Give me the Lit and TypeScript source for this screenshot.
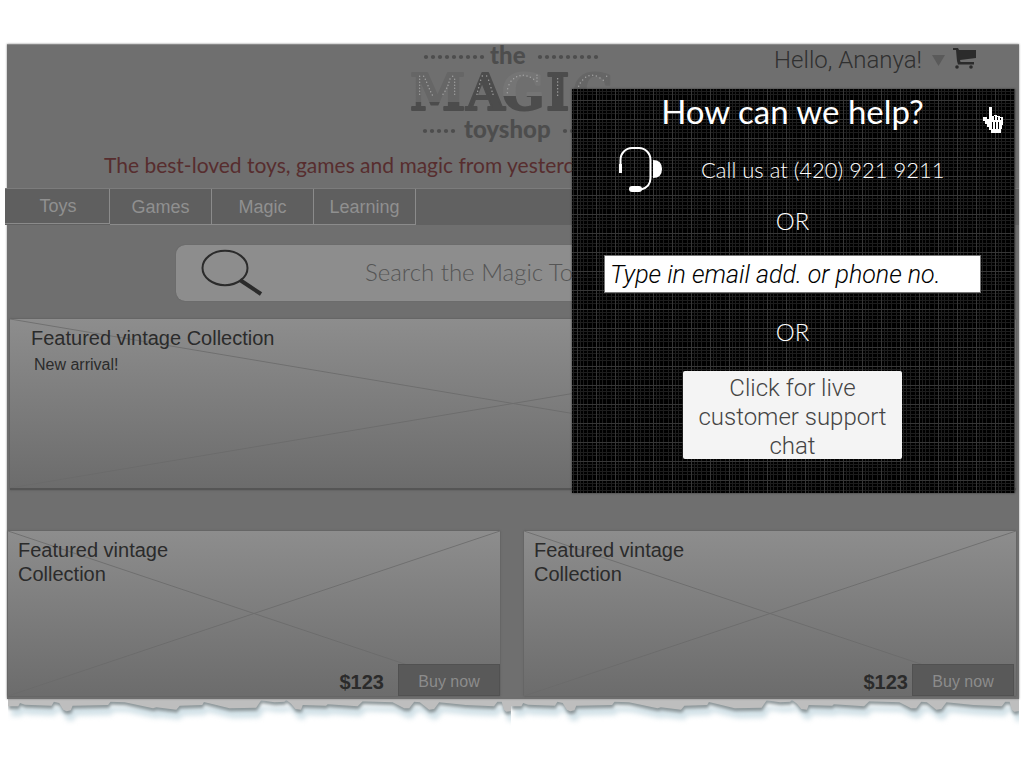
import { LitElement, html, css, svg } from "lit";
import { customElement } from "lit/decorators.js";

const TEAR =
  "M24 50 V80 L55 80 L60 70 L75 75 L155 78 L162 66 L178 70 L190 90 L200 95 L213 92 L218 78 L325 76 L332 66 L375 68 L460 86 L470 83 L530 90 L540 78 L608 76 L613 67 L690 86 L770 84 L785 62 L825 68 L855 66 L860 60 L875 72 L888 88 L905 90 L910 76 L980 78 L985 74 L1075 80 L1090 65 L1180 68 L1215 86 L1230 86 L1245 66 L1262 68 L1290 90 L1305 88 L1320 68 L1400 76 L1485 80 L1495 66 L1508 66 L1515 90 L1522 96 L1536 94 V50 Z";

const DOTS_M = [[89,118],[89,127],[89,136],[89,145],[89,154],[89,163],[89,172],[101,118],[106,127],[110,136],[114,146],[118,155],[122,164],[127,174],[188,118],[180,126],[177,136],[174,145],[170,154],[165,163],[159,172],[194,127],[194,136],[194,145],[194,154],[194,163],[194,172]];
const DOTS_A = [[277,117],[290,117],[272,130],[296,130],[269,141],[299,141],[266,152],[303,152],[263,163],[306,163],[261,172],[309,172]];
const DOTS_G = [[352,167],[353,155],[357,143],[363,133],[371,125],[380,119],[390,116],[400,115],[411,117],[421,121],[431,127],[441,133],[441,123],[441,115]];
const DOTS_I = [[503,125],[503,135],[503,145],[503,155],[503,165],[503,175]];
const DOTS_C = [[566,148],[571,138],[578,129],[587,121],[597,116],[608,115],[619,117],[630,123],[640,130],[650,118]];

@customElement("app-root")
export class AppRoot extends LitElement {
  static styles = css`
    :host {
      display: block;
      min-height: 100vh;
      box-sizing: border-box;
      padding: 44px 5px 0 7px;
      background: #fff;
      color: #2b2b2b;
      font-family: "Liberation Sans", Arial, sans-serif;
    }
    * { box-sizing: border-box; }
    .shell {
      position: relative;
      background: #6f6f6f;
      border-top: 1px solid #8a8a8a;
      box-shadow: 0 0 2px #8a8a8a;
      padding-bottom: 3px;
    }
    .header {
      display: grid;
      grid-template-columns: 1fr 200px 1fr;
      height: 99px;
      padding-right: 6px;
    }
    .logo { grid-column: 2; display: block; width: 200px; height: 100px; overflow: visible; }
    .word { font-family: Lato, sans-serif; font-weight: 900; font-size: 24px; fill: #4d4d4d; }
    .magic { font-family: "DejaVu Serif", serif; font-weight: 700; font-size: 50px; stroke-width: 2px; stroke-linejoin: round; }
    .account {
      justify-self: end;
      display: flex;
      align-items: center;
      gap: 8px;
      height: 30px;
      margin-right: 36px;
    }
    .greet {
      display: flex;
      align-items: center;
      gap: 10px;
      padding: 0;
      border: 0;
      background: none;
      color: #303030;
      font: 300 24px Roboto, "Liberation Sans", sans-serif;
      white-space: nowrap;
    }
    .tagline {
      margin: 0;
      padding: 6px 0 0 97px;
      height: 44px;
      color: #572d2e;
      font: 400 21px/30px Lato, sans-serif;
      white-space: nowrap;
    }
    .nav {
      display: flex;
      height: 37px;
      margin-left: -2px;
      background: #616161;
      border-top: 1px solid #7c7c7c;
    }
    .tab {
      width: 102px;
      border: 1px solid #8b8b8b;
      border-left: 0;
      border-top: 0;
      background: #5f5f5f;
      color: #909090;
      font-size: 18px;
      line-height: 36px;
      text-align: center;
      text-decoration: none;
    }
    .tab.first { width: 105px; height: 35px; line-height: 34px; padding-left: 2px; }
    .search {
      display: flex;
      align-items: center;
      height: 56px;
      margin: 20px 169px 18px;
      border-radius: 9px;
      background: #8d8d8d;
      box-shadow: 0 0 1px #555;
    }
    .lens { width: 64px; height: 50px; margin: 0 101px 0 24px; flex: none; }
    .query {
      flex: 1;
      min-width: 0;
      padding: 0 0 4px;
      border: 0;
      background: none;
      font: 300 24px Lato, sans-serif;
      color: #333;
    }
    .query::placeholder { color: #555; opacity: 1; }
    .tile {
      position: relative;
      display: flex;
      flex-direction: column;
      background: linear-gradient(#8d8d8d, #6c6c6c);
      box-shadow: 0 0 2px #555;
    }
    .cross { position: absolute; inset: 0; width: 100%; height: 100%; }
    .title, .note { position: relative; margin: 0; font-weight: 400; }
    .title { font-size: 20px; line-height: 24px; }
    .note { font-size: 16px; line-height: 20px; }
    .hero { height: 171px; margin: 0 3px 41px; padding: 7px 21px; border-bottom: 2px solid #555; }
    .hero .note { padding: 5px 0 0 3px; }
    .cards { display: grid; grid-template-columns: 1fr 1fr; gap: 24px; padding: 0 3px 0 1px; }
    .card { height: 165px; justify-content: space-between; }
    .card .title { padding: 7px 10px; max-width: 200px; }
    .buyrow { position: relative; display: flex; justify-content: flex-end; align-items: flex-end; gap: 14px; }
    .tight { gap: 4px; padding-right: 2px; }
    .price { font-size: 20px; font-weight: 700; line-height: 28px; }
    .buy {
      width: 102px;
      height: 32px;
      padding: 3px 0 0;
      border: 1px solid #515151;
      background: #595959;
      color: #8c8c8c;
      font: 400 16px "Liberation Sans", sans-serif;
    }
    .tear { display: grid; grid-template-columns: 503fr 508fr; padding-left: 1px; }
    .strip { width: 100%; height: 30px; display: block; }
    .halo { fill: #d3e2e8; filter: blur(8px); }
    .shade { fill: #8d979a; filter: blur(4px); }
    .help {
      position: absolute;
      top: 44px;
      right: 4px;
      width: 443px;
      height: 404px;
      padding-right: 2px;
      display: flex;
      flex-direction: column;
      align-items: center;
      color: #fff;
      background: #000;
      box-shadow: 0 0 2px #333;
    }
    .weave { position: absolute; inset: 0; width: 100%; height: 100%; }
    .help > :not(.weave):not(.hand) { position: relative; }
    .ask { margin: 0; padding-top: 2px; font: 400 33px/40px Lato, sans-serif; }
    .call { display: flex; align-items: center; gap: 37px; height: 50px; margin-top: 14px; width: 349px; font: 300 22px/30px Lato, sans-serif; white-space: nowrap; }
    .headset { width: 46px; height: 48px; flex: none; }
    .or { margin: 11px 0 0; font: 300 24px/30px Lato, sans-serif; }
    .contact {
      width: 377px;
      height: 38px;
      margin-top: 19px;
      padding: 0 5px;
      border: 1px solid #777;
      border-radius: 0;
      background: #fff;
      color: #000;
      font: italic 300 25px Roboto, sans-serif;
    }
    .contact::placeholder { color: #000; opacity: 1; }
    .or.second { margin-top: 24px; }
    .chat {
      width: 219px;
      height: 88px;
      margin-top: 24px;
      padding: 3px 10px 0;
      border: 0;
      border-radius: 2px;
      background: #f4f4f4;
      color: #444;
      font: 300 24px/29px Roboto, sans-serif;
    }
    .hand { position: absolute; top: 17px; right: 10px; width: 24px; height: 28px; }
  `;

  private dots(list: number[][]) {
    return list.map(([x, y]) => svg`<circle cx=${x} cy=${y} r="2.2"/>`);
  }

  private row(x: number, y: number, n: number) {
    return Array.from({ length: n }, (_, i) => svg`<circle cx=${x + i * 7} cy=${y} r="2.1"/>`);
  }

  private cross() {
    return html`<svg class="cross" viewBox="0 0 100 100" preserveAspectRatio="none" aria-hidden="true">
      <defs><linearGradient id="fade" gradientUnits="userSpaceOnUse" x1="0" y1="0" x2="0" y2="100">
        <stop offset="0" stop-color="#707070"/><stop offset="1" stop-color="#6a6a6a"/>
      </linearGradient></defs>
      <path d="M0 0L100 100M100 0L0 100" fill="none" stroke="url(#fade)" vector-effect="non-scaling-stroke"/>
    </svg>`;
  }

  private card(tight: boolean) {
    return html`<article class="tile card">
      ${this.cross()}
      <h2 class="title">Featured vintage Collection</h2>
      <div class="buyrow ${tight ? "tight" : ""}"><span class="price">$123</span><button class="buy">Buy now</button></div>
    </article>`;
  }

  private strip() {
    return html`<svg class="strip" viewBox="24 58 1512 90" preserveAspectRatio="none" aria-hidden="true">
      <path class="halo" d=${TEAR} transform="translate(10 30)"/>
      <path class="shade" d=${TEAR} transform="translate(2 9)"/>
      <path d=${TEAR} fill="#bebebe"/>
    </svg>`;
  }

  render() {
    return html`
      <div class="shell">
        <header class="header">
          <svg class="logo" viewBox="410 44 200 100" role="img" aria-label="the Magic toyshop">
            <defs>
              <linearGradient id="pale" x1="0" y1="0" x2="0" y2="1">
                <stop offset=".66" stop-color="#666"/><stop offset=".66" stop-color="#4c4c4c"/>
              </linearGradient>
              <linearGradient id="paler" x1="0" y1="0" x2="0" y2="1">
                <stop offset=".56" stop-color="#757575"/><stop offset=".56" stop-color="#4c4c4c"/>
              </linearGradient>
            </defs>
            <g fill="#4d4d4d">${this.row(426, 56, 9)}${this.row(540, 56, 9)}${this.row(425, 130, 5)}${this.row(565, 130, 5)}</g>
            <text class="word" x="490" y="63">the</text>
            <text class="magic" y="109"><tspan x="410" fill="url(#pale)" stroke="url(#pale)">M</tspan><tspan x="466" fill="#4c4c4c" stroke="#4c4c4c">A</tspan><tspan x="502" fill="url(#paler)" stroke="url(#paler)">G</tspan><tspan x="546" fill="#4c4c4c" stroke="#4c4c4c">I</tspan><tspan x="573" fill="#666" stroke="#666">C</tspan></text>
            <g transform="translate(390 36) scale(.3333)" fill="#a2a2a2">
              ${this.dots(DOTS_M)}${this.dots(DOTS_A)}${this.dots(DOTS_G)}${this.dots(DOTS_I)}${this.dots(DOTS_C)}
            </g>
            <text class="word" x="464" y="137">toyshop</text>
          </svg>
          <div class="account">
            <button class="greet">Hello, Ananya!
              <svg width="13" height="11" viewBox="0 0 13 11" aria-hidden="true"><path d="M0 0h13L6.500 11z" fill="#5a5a5a"/></svg>
            </button>
            <svg width="24" height="24" viewBox="0 0 24 24" role="img" aria-label="Cart" fill="#2b2b2b">
              <path d="M0 0h5l1 2h17v8L7 12l.5 2H21V16.500H5L4 13 3 2H0z"/><circle cx="4" cy="19" r="1.800"/><circle cx="18" cy="19" r="1.800"/>
            </svg>
          </div>
        </header>
        <p class="tagline">The best-loved toys, games and magic from yesterday</p>
        <nav class="nav">
          <a class="tab first" href="#toys">Toys</a>
          <a class="tab" href="#games">Games</a>
          <a class="tab" href="#magic">Magic</a>
          <a class="tab" href="#learning">Learning</a>
        </nav>
        <form class="search" role="search">
          <svg class="lens" viewBox="0 0 64 50" aria-hidden="true">
            <ellipse cx="25" cy="20" rx="22.500" ry="17.200" fill="none" stroke="#2b2b2b" stroke-width="2"/>
            <path d="M40 32L61 46" stroke="#2b2b2b" stroke-width="4"/>
          </svg>
          <input class="query" type="search" aria-label="Search" placeholder="Search the Magic Toyshop">
        </form>
        <section class="tile hero">
          ${this.cross()}
          <h2 class="title">Featured vintage Collection</h2>
          <p class="note">New arrival!</p>
        </section>
        <div class="cards">${this.card(false)}${this.card(true)}</div>
        <aside class="help" role="dialog" aria-labelledby="ask">
          <svg class="weave" aria-hidden="true">
            <defs><pattern id="cloth" width="19" height="19" patternUnits="userSpaceOnUse">
              <path d="M1.500 0v19M8.500 0v19M11.500 0v19M15.500 0v19M0 2.500h19M0 5.500h19M0 14.500h19M0 17.500h19" stroke="#1d1d1d"/>
              <path d="M5.500 0v19M0 11.500h19" stroke="#363636"/>
            </pattern></defs>
            <rect width="100%" height="100%" fill="url(#cloth)"/>
          </svg>
          <h1 class="ask" id="ask">How can we help?</h1>
          <div class="call">
            <svg class="headset" viewBox="618 146 46 48" aria-hidden="true" fill="none" stroke="#fff">
              <path d="M620.500 173V160A11.500 12 0 0 1 632 148H639A11.500 12 0 0 1 650.500 160V178Q650.500 187 641 189.500" stroke-width="2"/>
              <path d="M620.500 164V173" stroke-width="3"/>
              <path d="M653 160Q662 160 662 169T653 178Z" fill="#fff" stroke="none"/>
              <rect x="629" y="186" width="13" height="6" rx="3" fill="#fff" stroke="none"/>
            </svg>
            <span>Call us at (420) 921 9211</span>
          </div>
          <p class="or">OR</p>
          <input class="contact" type="text" aria-label="Email address or phone number" placeholder="Type in email add. or phone no.">
          <p class="or second">OR</p>
          <button class="chat">Click for live customer support chat</button>
          <svg class="hand" viewBox="0 0 24 28" aria-hidden="true" shape-rendering="crispEdges">
            <path d="M8 1h3v9h2v-1h3v1h3v1h3v8h-1v4h-1v4H10v-3H8v-3H6v-3H4v-3H2v-4h4v2h2z" fill="#fff"/>
            <path d="M11.500 16v7M14.500 16v7M17.500 16v7M13.500 10v4M16.500 11v3M19.500 12v2" stroke="#000" fill="none"/>
          </svg>
        </aside>
      </div>
      <div class="tear">${this.strip()}${this.strip()}</div>
    `;
  }
}
